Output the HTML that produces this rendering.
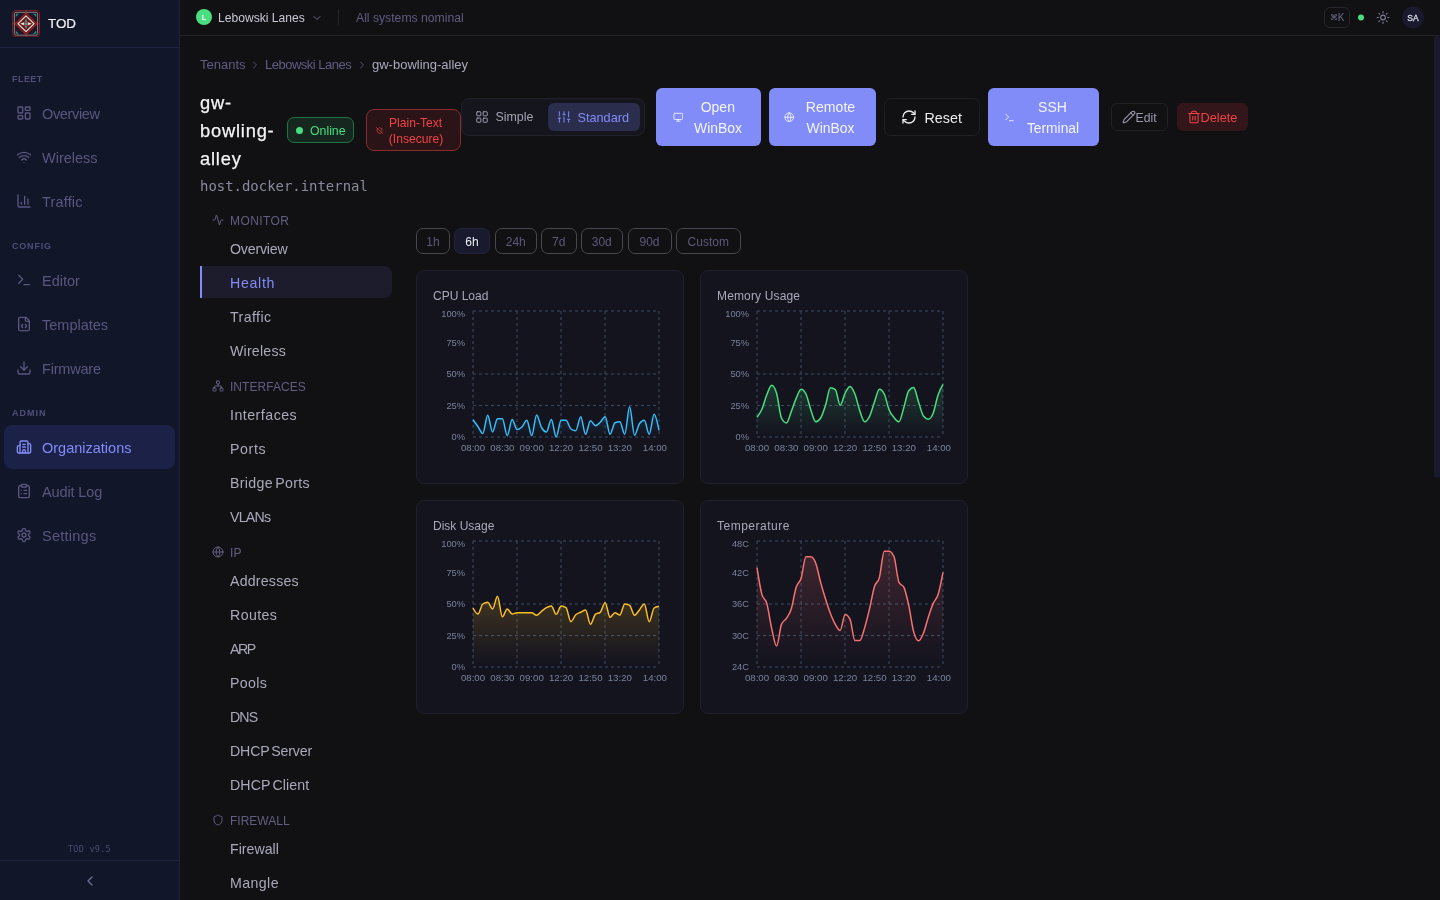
<!DOCTYPE html>
<html lang="en">
<head>
<meta charset="utf-8">
<title>TOD - gw-bowling-alley</title>
<style>
*{box-sizing:border-box;margin:0;padding:0}
html,body{width:1440px;height:900px;overflow:hidden;background:#111113;font-family:"Liberation Sans",sans-serif;color:#e4e4ea}
.abs{position:absolute}
.t{white-space:nowrap}
svg.ic{fill:none;stroke:currentColor;stroke-width:2;stroke-linecap:round;stroke-linejoin:round;display:block}
/* sidebar */
#sb{will-change:transform;position:absolute;left:0;top:0;width:180px;height:900px;background:#111628;border-right:1px solid #1c233b}
#sb .hd{position:absolute;left:0;top:0;width:179px;height:48px;border-bottom:1px solid #1c233b}
#sb .brand{position:absolute;left:48px;top:15px;font-size:13.4px;-webkit-text-stroke:.2px #f2f2f6;font-weight:400;color:#f2f2f6;line-height:18px}
#sb .sec{position:absolute;left:12px;font-size:9px;font-weight:700;letter-spacing:.45px;color:#514e7a;line-height:12px;margin-top:-.2px}
#sb .it{position:absolute;left:4px;width:171px;height:44px;border-radius:8px;color:#5a5680;font-size:14.5px}
#sb .it svg{position:absolute;left:12px;top:14px;width:16px;height:16px}
#sb .it span{position:absolute;left:38px;top:14px;line-height:18px;white-space:nowrap}
#sb .it.on{background:#1c2147;color:#818cf8}
#sb .ver{position:absolute;left:0;width:179px;top:843px;text-align:center;font-family:"DejaVu Sans Mono","Liberation Mono",monospace;font-size:8.6px;color:#4a4c72;line-height:10px;letter-spacing:.2px;margin-top:1.3px}
#sb .ft{position:absolute;left:0;top:860px;width:179px;height:40px;border-top:1px solid #1c233b;color:#6b7194}
/* topbar */
#tb{will-change:transform;position:absolute;left:180px;top:0;width:1260px;height:36px;border-bottom:1px solid #232326}
#main{will-change:transform;position:absolute;left:180px;top:36px;width:1260px;height:864px;overflow:hidden}

#tb .org{position:absolute;left:16px;top:9px;width:16px;height:16px;border-radius:50%;background:#4ade80;color:#fff;font-size:7.5px;font-weight:700;text-align:center;line-height:17.5px}
#tb .orgn{position:absolute;left:38px;top:10.7px;font-size:12.1px;line-height:15px;color:#c9c9d6;white-space:nowrap}
#tb .div{position:absolute;left:158px;top:9px;width:1px;height:16px;background:#232329}
#tb .st{position:absolute;left:176px;top:10.7px;font-size:12.2px;line-height:15px;color:#5f5b81;white-space:nowrap}
#tb .kbd{position:absolute;left:1144.4px;top:7.4px;width:25.5px;height:20.5px;border:1px solid #26262c;border-radius:6px;color:#6b6b8a;font-size:9px;line-height:18px;text-align:center}
#tb .dot{transform:translateY(.5px);position:absolute;left:1178px;top:14px;width:6px;height:6px;border-radius:50%;background:#4ade80}
#tb .ava{transform:translateY(.5px);position:absolute;left:1222px;top:6px;width:22px;height:22px;border-radius:50%;background:#1a1a2e;color:#d4d4e2;font-size:8.5px;font-weight:400;-webkit-text-stroke:.35px #d4d4e2;letter-spacing:.2px;text-align:center;line-height:22px}
.scroll{position:absolute;left:1254px;top:0;width:6px;height:442px;border-radius:3px;background:#1a1a2e}
.bc{position:absolute;top:21px;font-size:13px;line-height:16px;color:#605c82;white-space:nowrap}
.ttl{position:absolute;left:20px;top:53px;letter-spacing:.8px;-webkit-text-stroke:.25px #f4f4f8;font-size:18.3px;line-height:28px;color:#f4f4f8;font-weight:400}
.host{position:absolute;left:20px;top:141px;font-family:"DejaVu Sans Mono","Liberation Mono",monospace;font-size:13.95px;line-height:18px;color:#8a8a9f;margin-top:.4px;white-space:nowrap}
.badge-on{position:absolute;left:107px;top:81px;width:68px;height:26px;border:1px solid #1f7a3f;background:#12301f;border-radius:6px;color:#4ade80;font-size:12.5px;line-height:24px}
.badge-on i{position:absolute;left:8px;top:8px;width:7px;height:7px;border-radius:50%;background:#4ade80}
.badge-on span{position:absolute;left:22px;top:0}
.badge-pt{position:absolute;left:186px;top:73px;width:95px;height:42px;border:1px solid #8a2a2a;background:#2b1518;border-radius:6px;color:#ef4444;font-size:12.5px;line-height:16px;text-align:center}
.tg{position:absolute;left:281px;top:62px;width:184px;height:38px;border:1px solid #22222c;background:#16161f;border-radius:8px}
.tg .a,.tg .b{position:absolute;top:4px;height:28px;border-radius:6px;font-size:12.5px;line-height:28px;white-space:nowrap}
.tg .a{left:5px;width:78px;color:#a0a0b4}
.tg .b{left:86px;width:92px;background:#2a2d52;color:#818cf8}
.btnp{position:absolute;top:52px;height:58px;border-radius:6px;background:#818cf8;color:#fff;font-size:14.5px;line-height:21px;text-align:center}
.btno{position:absolute;border:1px solid #222228;border-radius:6px;white-space:nowrap}
.snl{position:absolute;left:50px;font-size:12px;line-height:14px;color:#625e83;white-space:nowrap;letter-spacing:.2px;margin-top:1.4px}
.sni{position:absolute;left:50px;font-size:14.2px;line-height:18px;color:#a9a9ba;white-space:nowrap;word-spacing:-2px}
.snic{position:absolute;left:31.5px;width:12px;height:12px;color:#625e83;margin-top:-.4px}
.rng{position:absolute;top:193px;height:25px;border:1px solid #3c3c44;border-radius:6px;color:#5d5d75;font-size:12px;line-height:23px;text-align:center}
.rng.on{background:#1a1a2e;border-color:#23233c;color:#e6e6f0}
.card{position:absolute;width:268px;height:214px;border:1px solid #20202c;border-radius:8px;background:#14141f}
.card h3{position:absolute;left:16px;top:17px;font-size:12px;font-weight:400;line-height:16px;color:#a9a9bb;white-space:nowrap}
svg.ch text{font-family:"Liberation Sans",sans-serif;font-size:9.7px;fill:#79829a}
svg.ch text.yl{font-size:9.3px}
svg.ch .grid{fill:none;stroke:#3b4a63;stroke-width:1;stroke-dasharray:3 3}
</style>
</head>
<body>
<div id="sb">
  <div class="hd">
    <svg class="abs" style="left:12px;top:9.7px" width="28" height="27.5" viewBox="0 0 28 28" preserveAspectRatio="none">
      <rect x="0.5" y="0.5" width="27" height="27" rx="3.5" fill="#2a1424" stroke="#861f24" stroke-width=".9"/>
      <rect x="2.400" y="2.400" width="23.200" height="23.200" rx="1.500" fill="#21152a" stroke="#8f8f8a" stroke-width=".9"/>
      <path d="M14 0.5V4M14 24v3.500M0.500 14H4M24 14h3.500" stroke="#b08a84" stroke-width=".6" opacity=".55"/>
      <path d="M14 3.300 24.700 14 14 24.700 3.300 14Z" fill="#1a0f1c" stroke="#a31f1f" stroke-width="1.300"/>
      <path d="M14 5.900 22.100 14 14 22.100 5.900 14Z" fill="#6c1719" stroke="#e4dccf" stroke-width="1.200"/>
      <path d="M14 8.300 16 14 14 19.700 12 14Z" fill="#27a79e"/>
      <path d="M8.200 14 12.500 12.100H15.500L19.800 14 15.500 15.900H12.500Z" fill="#f3ead8"/>
      <rect x="12.300" y="12.300" width="3.400" height="3.400" fill="#27a79e" stroke="#a31f1f" stroke-width=".8"/>
      <path d="M3.800 3.800h3.200L3.800 7Z M24.200 3.800h-3.200l3.200 3.200Z M3.800 24.200h3.200l-3.200-3.200Z M24.200 24.200h-3.200l3.200-3.200Z" fill="#1d8a84"/>
    </svg>
    <div class="brand">TOD</div>
  </div>
  <div class="sec" style="top:73px">FLEET</div>
  <div class="it" style="top:91px"><svg class="ic" viewBox="0 0 24 24"><rect width="7" height="9" x="3" y="3" rx="1"/><rect width="7" height="5" x="14" y="3" rx="1"/><rect width="7" height="9" x="14" y="12" rx="1"/><rect width="7" height="5" x="3" y="16" rx="1"/></svg><span style="letter-spacing:-0.34px">Overview</span></div>
  <div class="it" style="top:135px"><svg class="ic" viewBox="0 0 24 24"><path d="M12 20h.01"/><path d="M2 8.820a15 15 0 0 1 20 0"/><path d="M5 12.859a10 10 0 0 1 14 0"/><path d="M8.500 16.429a5 5 0 0 1 7 0"/></svg><span>Wireless</span></div>
  <div class="it" style="top:179px"><svg class="ic" viewBox="0 0 24 24"><path d="M3 3v16a2 2 0 0 0 2 2h16"/><path d="M18 17V9"/><path d="M13 17V5"/><path d="M8 17v-3"/></svg><span style="letter-spacing:0.17px">Traffic</span></div>
  <div class="sec" style="top:240px;letter-spacing:.8px">CONFIG</div>
  <div class="it" style="top:258px"><svg class="ic" viewBox="0 0 24 24"><polyline points="4 17 10 11 4 5"/><line x1="12" x2="20" y1="19" y2="19"/></svg><span>Editor</span></div>
  <div class="it" style="top:302px"><svg class="ic" viewBox="0 0 24 24"><path d="M10 12.500 8 15l2 2.500"/><path d="m14 12.500 2 2.500-2 2.500"/><path d="M14 2v4a2 2 0 0 0 2 2h4"/><path d="M15 2H6a2 2 0 0 0-2 2v16a2 2 0 0 0 2 2h12a2 2 0 0 0 2-2V7z"/></svg><span>Templates</span></div>
  <div class="it" style="top:346px"><svg class="ic" viewBox="0 0 24 24"><path d="M21 15v4a2 2 0 0 1-2 2H5a2 2 0 0 1-2-2v-4"/><polyline points="7 10 12 15 17 10"/><line x1="12" x2="12" y1="15" y2="3"/></svg><span style="letter-spacing:-0.20px">Firmware</span></div>
  <div class="sec" style="top:407.4px;letter-spacing:1px">ADMIN</div>
  <div class="it on" style="top:425px"><svg class="ic" viewBox="0 0 24 24"><path d="M10 12h4"/><path d="M10 8h4"/><path d="M14 21v-3a2 2 0 0 0-4 0v3"/><path d="M6 10H4a2 2 0 0 0-2 2v7a2 2 0 0 0 2 2h16a2 2 0 0 0 2-2V9a2 2 0 0 0-2-2h-2"/><path d="M6 21V5a2 2 0 0 1 2-2h8a2 2 0 0 1 2 2v16"/></svg><span>Organizations</span></div>
  <div class="it" style="top:469px"><svg class="ic" viewBox="0 0 24 24"><rect width="8" height="4" x="8" y="2" rx="1" ry="1"/><path d="M16 4h2a2 2 0 0 1 2 2v14a2 2 0 0 1-2 2H6a2 2 0 0 1-2-2V6a2 2 0 0 1 2-2h2"/><path d="M12 11h4"/><path d="M12 16h4"/><path d="M8 11h.01"/><path d="M8 16h.01"/></svg><span style="letter-spacing:-0.12px">Audit Log</span></div>
  <div class="it" style="top:513px"><svg class="ic" viewBox="0 0 24 24"><path d="M12.220 2h-.440a2 2 0 0 0-2 2v.180a2 2 0 0 1-1 1.730l-.430.250a2 2 0 0 1-2 0l-.150-.080a2 2 0 0 0-2.730.730l-.220.380a2 2 0 0 0 .730 2.730l.150.100a2 2 0 0 1 1 1.720v.510a2 2 0 0 1-1 1.740l-.150.090a2 2 0 0 0-.730 2.730l.220.380a2 2 0 0 0 2.730.730l.150-.080a2 2 0 0 1 2 0l.430.250a2 2 0 0 1 1 1.730V20a2 2 0 0 0 2 2h.440a2 2 0 0 0 2-2v-.180a2 2 0 0 1 1-1.730l.430-.250a2 2 0 0 1 2 0l.150.080a2 2 0 0 0 2.730-.730l.220-.390a2 2 0 0 0-.730-2.730l-.150-.080a2 2 0 0 1-1-1.740v-.500a2 2 0 0 1 1-1.740l.150-.090a2 2 0 0 0 .730-2.730l-.220-.380a2 2 0 0 0-2.730-.730l-.150.080a2 2 0 0 1-2 0l-.430-.250a2 2 0 0 1-1-1.730V4a2 2 0 0 0-2-2z"/><circle cx="12" cy="12" r="3"/></svg><span style="letter-spacing:.25px">Settings</span></div>
  <div class="ver">TOD v9.5</div>
  <div class="ft"><svg class="ic abs" style="left:81.6px;top:11.6px" width="16" height="16" viewBox="0 0 24 24"><path d="m15 18-6-6 6-6"/></svg></div>
</div>
<div id="tb">
  <div class="org">L</div><div class="orgn">Lebowski Lanes</div>
  <svg class="ic abs" style="left:130.5px;top:12px;color:#6b6b8a" width="12" height="12" viewBox="0 0 24 24"><path d="m6 9 6 6 6-6"/></svg>
  <div class="div"></div><div class="st">All systems nominal</div>
  <div class="kbd"><span style="font-size:7.5px;position:relative;top:-.4px">⌘</span><span style="font-size:10px;position:relative;top:.8px">K</span></div><div class="dot"></div>
  <svg class="ic abs" style="left:1196px;top:10px;transform:translateY(.5px);color:#7a7a96" width="14" height="14" viewBox="0 0 24 24"><circle cx="12" cy="12" r="4"/><path d="M12 2v2"/><path d="M12 20v2"/><path d="m4.930 4.930 1.410 1.410"/><path d="m17.660 17.660 1.410 1.410"/><path d="M2 12h2"/><path d="M20 12h2"/><path d="m6.340 17.660-1.410 1.410"/><path d="m19.070 4.930-1.410 1.410"/></svg>
  <div class="ava">SA</div>
</div>
<div id="main">
  <div class="scroll"></div>
  <div class="bc" style="left:20px">Tenants</div><svg class="ic abs" style="left:69px;top:22.6px;color:#534f72" width="12" height="12" viewBox="0 0 24 24"><path d="m9 18 6-6-6-6"/></svg>
  <div class="bc" style="left:85px;letter-spacing:-.5px">Lebowski Lanes</div><svg class="ic abs" style="left:176px;top:22.6px;color:#534f72" width="12" height="12" viewBox="0 0 24 24"><path d="m9 18 6-6-6-6"/></svg>
  <div class="bc" style="left:192px;color:#a9a9bb">gw-bowling-alley</div>
  <div class="ttl">gw-<br>bowling-<br>alley</div>
  <div class="host">host.docker.internal</div>
<svg class="ic snic" style="top:178px" viewBox="0 0 24 24"><path d="M22 12h-2.480a2 2 0 0 0-1.930 1.460l-2.350 8.360a.250.250 0 0 1-.480 0L9.240 2.180a.250.250 0 0 0-.480 0l-2.350 8.360A2 2 0 0 1 4.490 12H2"/></svg><div class="snl" style="top:177px;letter-spacing:0.43px">MONITOR</div>
  <div class="sni" style="top:204px;letter-spacing:-0.20px">Overview</div>
  <div class="abs" style="left:20px;top:230px;width:192px;height:32px;background:#1c1c2c;border-left:2px solid #818cf8;border-radius:0 8px 8px 0"></div>
  <div class="sni" style="top:238px;color:#818cf8;letter-spacing:0.68px">Health</div>
  <div class="sni" style="top:272px;letter-spacing:0.40px">Traffic</div>
  <div class="sni" style="top:306px;letter-spacing:0.20px">Wireless</div>
  <svg class="ic snic" style="top:344px" viewBox="0 0 24 24"><rect x="16" y="16" width="6" height="6" rx="1"/><rect x="2" y="16" width="6" height="6" rx="1"/><rect x="9" y="2" width="6" height="6" rx="1"/><path d="M5 16v-3a1 1 0 0 1 1-1h12a1 1 0 0 1 1 1v3"/><path d="M12 12V8"/></svg><div class="snl" style="top:343px;letter-spacing:0.04px">INTERFACES</div>
  <div class="sni" style="top:370px;letter-spacing:0.49px">Interfaces</div>
  <div class="sni" style="top:404px;letter-spacing:0.60px">Ports</div>
  <div class="sni" style="top:438px;letter-spacing:0.33px">Bridge Ports</div>
  <div class="sni" style="top:472px;letter-spacing:-0.75px">VLANs</div>
  <svg class="ic snic" style="top:510px" viewBox="0 0 24 24"><circle cx="12" cy="12" r="10"/><path d="M12 2a14.500 14.500 0 0 0 0 20 14.500 14.500 0 0 0 0-20"/><path d="M2 12h20"/></svg><div class="snl" style="top:509px">IP</div>
  <div class="sni" style="top:536px;letter-spacing:0.20px">Addresses</div>
  <div class="sni" style="top:570px;letter-spacing:0.40px">Routes</div>
  <div class="sni" style="top:604px;letter-spacing:-1.50px">ARP</div>
  <div class="sni" style="top:638px;letter-spacing:0.35px">Pools</div>
  <div class="sni" style="top:672px;letter-spacing:-0.90px">DNS</div>
  <div class="sni" style="top:706px;letter-spacing:-0.14px">DHCP Server</div>
  <div class="sni" style="top:740px;letter-spacing:0.10px">DHCP Client</div>
  <svg class="ic snic" style="top:778px" viewBox="0 0 24 24"><path d="M20 13c0 5-3.500 7.500-7.660 8.950a1 1 0 0 1-.670-.010C7.500 20.500 4 18 4 13V6a1 1 0 0 1 1-1c2 0 4.500-1.200 6.240-2.720a1.170 1.170 0 0 1 1.520 0C14.510 3.810 17 5 19 5a1 1 0 0 1 1 1z"/></svg><div class="snl" style="top:777px;letter-spacing:0.00px">FIREWALL</div>
  <div class="sni" style="top:804px">Firewall</div>
  <div class="sni" style="top:838px;letter-spacing:0.40px">Mangle</div>
  <div class="card" id="c1" style="left:236px;top:234px"><h3>CPU Load</h3></div>
  <div class="card" id="c2" style="left:520px;top:234px"><h3 style="letter-spacing:.15px">Memory Usage</h3></div>
  <div class="card" id="c3" style="left:236px;top:464px"><h3>Disk Usage</h3></div>
  <div class="card" id="c4" style="left:520px;top:464px"><h3 style="letter-spacing:.5px">Temperature</h3></div>
<!--CHARTS-->
<svg class="abs ch" style="left:236px;top:234px" width="268" height="214" viewBox="0 0 268 214">
<defs><linearGradient id="g1" x1="0" y1="0" x2="0" y2="1"><stop offset="5%" stop-color="#38bdf8" stop-opacity="0.18"/><stop offset="95%" stop-color="#38bdf8" stop-opacity="0"/></linearGradient></defs>
<path d="M57,41H243M57,104H243M57,135.5H243M57,167H243M57,41V167M101,41V167M145,41V167M189,41V167M243,41V167" class="grid"/>
<text x="57.0" y="181.4" text-anchor="middle">08:00</text>
<text x="86.4" y="181.4" text-anchor="middle">08:30</text>
<text x="115.7" y="181.4" text-anchor="middle">09:00</text>
<text x="145.1" y="181.4" text-anchor="middle">12:20</text>
<text x="174.5" y="181.4" text-anchor="middle">12:50</text>
<text x="203.8" y="181.4" text-anchor="middle">13:20</text>
<text x="251" y="181.4" text-anchor="end">14:00</text>
<text x="49" y="46.5" text-anchor="end" class="yl">100%</text>
<text x="49" y="76.0" text-anchor="end" class="yl">75%</text>
<text x="49" y="106.5" text-anchor="end" class="yl">50%</text>
<text x="49" y="139.0" text-anchor="end" class="yl">25%</text>
<text x="49" y="169.8" text-anchor="end" class="yl">0%</text>
<path d="M57.00,149.70C58.63,151.95 60.26,154.20 61.89,156.50C63.53,158.80 65.16,163.50 66.79,163.50C68.42,163.50 70.05,145.30 71.68,145.30C73.32,145.30 74.95,162.00 76.58,162.00C78.21,162.00 79.84,148.70 81.47,148.70C83.11,148.70 84.74,148.70 86.37,148.70C88.00,148.70 89.63,165.70 91.26,165.70C92.89,165.70 94.53,149.50 96.16,149.50C97.79,149.50 99.42,159.50 101.05,159.50C102.68,159.50 104.32,158.53 105.95,157.00C107.58,155.47 109.21,150.30 110.84,150.30C112.47,150.30 114.11,165.70 115.74,165.70C117.37,165.70 119.00,145.00 120.63,145.00C122.26,145.00 123.89,154.67 125.53,157.50C127.16,160.33 128.79,162.00 130.42,162.00C132.05,162.00 133.68,149.50 135.32,149.50C136.95,149.50 138.58,167.00 140.21,167.00C141.84,167.00 143.47,150.30 145.11,150.30C146.74,150.30 148.37,150.30 150.00,150.30C151.63,150.30 153.26,157.87 154.89,159.00C156.53,160.13 158.16,160.70 159.79,160.70C161.42,160.70 163.05,146.70 164.68,146.70C166.32,146.70 167.95,164.30 169.58,164.30C171.21,164.30 172.84,150.70 174.47,150.70C176.11,150.70 177.74,155.70 179.37,155.70C181.00,155.70 182.63,153.80 184.26,152.30C185.89,150.80 187.53,146.70 189.16,146.70C190.79,146.70 192.42,164.30 194.05,164.30C195.68,164.30 197.32,153.37 198.95,152.70C200.58,152.03 202.21,151.70 203.84,151.70C205.47,151.70 207.11,164.30 208.74,164.30C210.37,164.30 212.00,136.70 213.63,136.70C215.26,136.70 216.89,165.30 218.53,165.30C220.16,165.30 221.79,155.97 223.42,153.70C225.05,151.43 226.68,150.30 228.32,150.30C229.95,150.30 231.58,164.30 233.21,164.30C234.84,164.30 236.47,144.30 238.11,144.30C239.74,144.30 241.37,152.30 243.00,160.30L243.00,167L57,167Z" fill="url(#g1)"/>
<path d="M57.00,149.70C58.63,151.95 60.26,154.20 61.89,156.50C63.53,158.80 65.16,163.50 66.79,163.50C68.42,163.50 70.05,145.30 71.68,145.30C73.32,145.30 74.95,162.00 76.58,162.00C78.21,162.00 79.84,148.70 81.47,148.70C83.11,148.70 84.74,148.70 86.37,148.70C88.00,148.70 89.63,165.70 91.26,165.70C92.89,165.70 94.53,149.50 96.16,149.50C97.79,149.50 99.42,159.50 101.05,159.50C102.68,159.50 104.32,158.53 105.95,157.00C107.58,155.47 109.21,150.30 110.84,150.30C112.47,150.30 114.11,165.70 115.74,165.70C117.37,165.70 119.00,145.00 120.63,145.00C122.26,145.00 123.89,154.67 125.53,157.50C127.16,160.33 128.79,162.00 130.42,162.00C132.05,162.00 133.68,149.50 135.32,149.50C136.95,149.50 138.58,167.00 140.21,167.00C141.84,167.00 143.47,150.30 145.11,150.30C146.74,150.30 148.37,150.30 150.00,150.30C151.63,150.30 153.26,157.87 154.89,159.00C156.53,160.13 158.16,160.70 159.79,160.70C161.42,160.70 163.05,146.70 164.68,146.70C166.32,146.70 167.95,164.30 169.58,164.30C171.21,164.30 172.84,150.70 174.47,150.70C176.11,150.70 177.74,155.70 179.37,155.70C181.00,155.70 182.63,153.80 184.26,152.30C185.89,150.80 187.53,146.70 189.16,146.70C190.79,146.70 192.42,164.30 194.05,164.30C195.68,164.30 197.32,153.37 198.95,152.70C200.58,152.03 202.21,151.70 203.84,151.70C205.47,151.70 207.11,164.30 208.74,164.30C210.37,164.30 212.00,136.70 213.63,136.70C215.26,136.70 216.89,165.30 218.53,165.30C220.16,165.30 221.79,155.97 223.42,153.70C225.05,151.43 226.68,150.30 228.32,150.30C229.95,150.30 231.58,164.30 233.21,164.30C234.84,164.30 236.47,144.30 238.11,144.30C239.74,144.30 241.37,152.30 243.00,160.30" fill="none" stroke="#38bdf8" stroke-width="1.500" stroke-linejoin="round"/>
</svg>
<svg class="abs ch" style="left:520px;top:234px" width="268" height="214" viewBox="0 0 268 214">
<defs><linearGradient id="g2" x1="0" y1="0" x2="0" y2="1"><stop offset="5%" stop-color="#4ade80" stop-opacity="0.18"/><stop offset="95%" stop-color="#4ade80" stop-opacity="0"/></linearGradient></defs>
<path d="M57,41H243M57,104H243M57,135.5H243M57,167H243M57,41V167M101,41V167M145,41V167M189,41V167M243,41V167" class="grid"/>
<text x="57.0" y="181.4" text-anchor="middle">08:00</text>
<text x="86.4" y="181.4" text-anchor="middle">08:30</text>
<text x="115.7" y="181.4" text-anchor="middle">09:00</text>
<text x="145.1" y="181.4" text-anchor="middle">12:20</text>
<text x="174.5" y="181.4" text-anchor="middle">12:50</text>
<text x="203.8" y="181.4" text-anchor="middle">13:20</text>
<text x="251" y="181.4" text-anchor="end">14:00</text>
<text x="49" y="46.5" text-anchor="end" class="yl">100%</text>
<text x="49" y="76.0" text-anchor="end" class="yl">75%</text>
<text x="49" y="106.5" text-anchor="end" class="yl">50%</text>
<text x="49" y="139.0" text-anchor="end" class="yl">25%</text>
<text x="49" y="169.8" text-anchor="end" class="yl">0%</text>
<path d="M57.00,147.20C58.63,145.07 60.26,142.93 61.89,139.20C63.53,135.47 65.16,128.80 66.79,124.80C68.42,120.80 70.05,115.20 71.68,115.20C73.32,115.20 74.95,117.87 76.58,123.20C78.21,128.53 79.84,144.67 81.47,148.00C83.11,151.33 84.74,153.00 86.37,153.00C88.00,153.00 89.63,145.70 91.26,141.60C92.89,137.50 94.53,132.13 96.16,128.40C97.79,124.67 99.42,119.20 101.05,119.20C102.68,119.20 104.32,120.80 105.95,124.00C107.58,127.20 109.21,135.37 110.84,140.00C112.47,144.63 114.11,151.80 115.74,151.80C117.37,151.80 119.00,150.53 120.63,148.00C122.26,145.47 123.89,140.23 125.53,135.20C127.16,130.17 128.79,117.80 130.42,117.80C132.05,117.80 133.68,118.40 135.32,119.60C136.95,120.80 138.58,135.20 140.21,135.20C141.84,135.20 143.47,126.33 145.11,123.20C146.74,120.07 148.37,116.40 150.00,116.40C151.63,116.40 153.26,119.93 154.89,124.00C156.53,128.07 158.16,136.17 159.79,140.80C161.42,145.43 163.05,151.80 164.68,151.80C166.32,151.80 167.95,149.70 169.58,146.40C171.21,143.10 172.84,136.53 174.47,132.00C176.11,127.47 177.74,119.20 179.37,119.20C181.00,119.20 182.63,120.80 184.26,124.00C185.89,127.20 187.53,136.07 189.16,140.00C190.79,143.93 192.42,145.63 194.05,147.60C195.68,149.57 197.32,151.80 198.95,151.80C200.58,151.80 202.21,142.77 203.84,137.60C205.47,132.43 207.11,122.93 208.74,120.80C210.37,118.67 212.00,117.60 213.63,117.60C215.26,117.60 216.89,127.27 218.53,132.00C220.16,136.73 221.79,143.87 223.42,146.00C225.05,148.13 226.68,149.20 228.32,149.20C229.95,149.20 231.58,147.20 233.21,143.20C234.84,139.20 236.47,129.60 238.11,124.80C239.74,120.00 241.37,117.20 243.00,114.40L243.00,167L57,167Z" fill="url(#g2)"/>
<path d="M57.00,147.20C58.63,145.07 60.26,142.93 61.89,139.20C63.53,135.47 65.16,128.80 66.79,124.80C68.42,120.80 70.05,115.20 71.68,115.20C73.32,115.20 74.95,117.87 76.58,123.20C78.21,128.53 79.84,144.67 81.47,148.00C83.11,151.33 84.74,153.00 86.37,153.00C88.00,153.00 89.63,145.70 91.26,141.60C92.89,137.50 94.53,132.13 96.16,128.40C97.79,124.67 99.42,119.20 101.05,119.20C102.68,119.20 104.32,120.80 105.95,124.00C107.58,127.20 109.21,135.37 110.84,140.00C112.47,144.63 114.11,151.80 115.74,151.80C117.37,151.80 119.00,150.53 120.63,148.00C122.26,145.47 123.89,140.23 125.53,135.20C127.16,130.17 128.79,117.80 130.42,117.80C132.05,117.80 133.68,118.40 135.32,119.60C136.95,120.80 138.58,135.20 140.21,135.20C141.84,135.20 143.47,126.33 145.11,123.20C146.74,120.07 148.37,116.40 150.00,116.40C151.63,116.40 153.26,119.93 154.89,124.00C156.53,128.07 158.16,136.17 159.79,140.80C161.42,145.43 163.05,151.80 164.68,151.80C166.32,151.80 167.95,149.70 169.58,146.40C171.21,143.10 172.84,136.53 174.47,132.00C176.11,127.47 177.74,119.20 179.37,119.20C181.00,119.20 182.63,120.80 184.26,124.00C185.89,127.20 187.53,136.07 189.16,140.00C190.79,143.93 192.42,145.63 194.05,147.60C195.68,149.57 197.32,151.80 198.95,151.80C200.58,151.80 202.21,142.77 203.84,137.60C205.47,132.43 207.11,122.93 208.74,120.80C210.37,118.67 212.00,117.60 213.63,117.60C215.26,117.60 216.89,127.27 218.53,132.00C220.16,136.73 221.79,143.87 223.42,146.00C225.05,148.13 226.68,149.20 228.32,149.20C229.95,149.20 231.58,147.20 233.21,143.20C234.84,139.20 236.47,129.60 238.11,124.80C239.74,120.00 241.37,117.20 243.00,114.40" fill="none" stroke="#4ade80" stroke-width="1.500" stroke-linejoin="round"/>
</svg>
<svg class="abs ch" style="left:236px;top:464px" width="268" height="214" viewBox="0 0 268 214">
<defs><linearGradient id="g3" x1="0" y1="0" x2="0" y2="1"><stop offset="5%" stop-color="#fbbf24" stop-opacity="0.18"/><stop offset="95%" stop-color="#fbbf24" stop-opacity="0"/></linearGradient></defs>
<path d="M57,41H243M57,104H243M57,135.5H243M57,167H243M57,41V167M101,41V167M145,41V167M189,41V167M243,41V167" class="grid"/>
<text x="57.0" y="181.4" text-anchor="middle">08:00</text>
<text x="86.4" y="181.4" text-anchor="middle">08:30</text>
<text x="115.7" y="181.4" text-anchor="middle">09:00</text>
<text x="145.1" y="181.4" text-anchor="middle">12:20</text>
<text x="174.5" y="181.4" text-anchor="middle">12:50</text>
<text x="203.8" y="181.4" text-anchor="middle">13:20</text>
<text x="251" y="181.4" text-anchor="end">14:00</text>
<text x="49" y="46.5" text-anchor="end" class="yl">100%</text>
<text x="49" y="76.0" text-anchor="end" class="yl">75%</text>
<text x="49" y="106.5" text-anchor="end" class="yl">50%</text>
<text x="49" y="139.0" text-anchor="end" class="yl">25%</text>
<text x="49" y="169.8" text-anchor="end" class="yl">0%</text>
<path d="M57.00,108.00C58.63,111.00 60.26,114.00 61.89,114.00C63.53,114.00 65.16,105.13 66.79,104.00C68.42,102.87 70.05,102.30 71.68,102.30C73.32,102.30 74.95,109.00 76.58,109.00C78.21,109.00 79.84,96.30 81.47,96.30C83.11,96.30 84.74,116.70 86.37,116.70C88.00,116.70 89.63,109.00 91.26,109.00C92.89,109.00 94.53,114.00 96.16,114.00C97.79,114.00 99.42,112.80 101.05,112.80C102.68,112.80 104.32,112.80 105.95,112.80C107.58,112.80 109.21,112.80 110.84,112.80C112.47,112.80 114.11,112.80 115.74,112.80C117.37,112.80 119.00,115.30 120.63,115.30C122.26,115.30 123.89,112.57 125.53,111.30C127.16,110.03 128.79,108.58 130.42,107.70C132.05,106.82 133.68,106.00 135.32,106.00C136.95,106.00 138.58,114.30 140.21,114.30C141.84,114.30 143.47,106.00 145.11,106.00C146.74,106.00 148.37,106.57 150.00,107.70C151.63,108.83 153.26,121.70 154.89,121.70C156.53,121.70 158.16,116.27 159.79,114.70C161.42,113.13 163.05,113.08 164.68,112.30C166.32,111.52 167.95,110.00 169.58,110.00C171.21,110.00 172.84,124.30 174.47,124.30C176.11,124.30 177.74,115.63 179.37,114.30C181.00,112.97 182.63,113.63 184.26,112.30C185.89,110.97 187.53,102.70 189.16,102.70C190.79,102.70 192.42,117.30 194.05,117.30C195.68,117.30 197.32,112.70 198.95,112.70C200.58,112.70 202.21,115.00 203.84,115.00C205.47,115.00 207.11,104.00 208.74,104.00C210.37,104.00 212.00,104.43 213.63,105.30C215.26,106.17 216.89,115.30 218.53,115.30C220.16,115.30 221.79,111.88 223.42,110.00C225.05,108.12 226.68,104.00 228.32,104.00C229.95,104.00 231.58,121.70 233.21,121.70C234.84,121.70 236.47,109.13 238.11,108.00C239.74,106.87 241.37,106.58 243.00,106.30L243.00,167L57,167Z" fill="url(#g3)"/>
<path d="M57.00,108.00C58.63,111.00 60.26,114.00 61.89,114.00C63.53,114.00 65.16,105.13 66.79,104.00C68.42,102.87 70.05,102.30 71.68,102.30C73.32,102.30 74.95,109.00 76.58,109.00C78.21,109.00 79.84,96.30 81.47,96.30C83.11,96.30 84.74,116.70 86.37,116.70C88.00,116.70 89.63,109.00 91.26,109.00C92.89,109.00 94.53,114.00 96.16,114.00C97.79,114.00 99.42,112.80 101.05,112.80C102.68,112.80 104.32,112.80 105.95,112.80C107.58,112.80 109.21,112.80 110.84,112.80C112.47,112.80 114.11,112.80 115.74,112.80C117.37,112.80 119.00,115.30 120.63,115.30C122.26,115.30 123.89,112.57 125.53,111.30C127.16,110.03 128.79,108.58 130.42,107.70C132.05,106.82 133.68,106.00 135.32,106.00C136.95,106.00 138.58,114.30 140.21,114.30C141.84,114.30 143.47,106.00 145.11,106.00C146.74,106.00 148.37,106.57 150.00,107.70C151.63,108.83 153.26,121.70 154.89,121.70C156.53,121.70 158.16,116.27 159.79,114.70C161.42,113.13 163.05,113.08 164.68,112.30C166.32,111.52 167.95,110.00 169.58,110.00C171.21,110.00 172.84,124.30 174.47,124.30C176.11,124.30 177.74,115.63 179.37,114.30C181.00,112.97 182.63,113.63 184.26,112.30C185.89,110.97 187.53,102.70 189.16,102.70C190.79,102.70 192.42,117.30 194.05,117.30C195.68,117.30 197.32,112.70 198.95,112.70C200.58,112.70 202.21,115.00 203.84,115.00C205.47,115.00 207.11,104.00 208.74,104.00C210.37,104.00 212.00,104.43 213.63,105.30C215.26,106.17 216.89,115.30 218.53,115.30C220.16,115.30 221.79,111.88 223.42,110.00C225.05,108.12 226.68,104.00 228.32,104.00C229.95,104.00 231.58,121.70 233.21,121.70C234.84,121.70 236.47,109.13 238.11,108.00C239.74,106.87 241.37,106.58 243.00,106.30" fill="none" stroke="#fbbf24" stroke-width="1.500" stroke-linejoin="round"/>
</svg>
<svg class="abs ch" style="left:520px;top:464px" width="268" height="214" viewBox="0 0 268 214">
<defs><linearGradient id="g4" x1="0" y1="0" x2="0" y2="1"><stop offset="5%" stop-color="#f87171" stop-opacity="0.18"/><stop offset="95%" stop-color="#f87171" stop-opacity="0"/></linearGradient></defs>
<path d="M57,41H243M57,104H243M57,135.5H243M57,167H243M57,41V167M101,41V167M145,41V167M189,41V167M243,41V167" class="grid"/>
<text x="57.0" y="181.4" text-anchor="middle">08:00</text>
<text x="86.4" y="181.4" text-anchor="middle">08:30</text>
<text x="115.7" y="181.4" text-anchor="middle">09:00</text>
<text x="145.1" y="181.4" text-anchor="middle">12:20</text>
<text x="174.5" y="181.4" text-anchor="middle">12:50</text>
<text x="203.8" y="181.4" text-anchor="middle">13:20</text>
<text x="251" y="181.4" text-anchor="end">14:00</text>
<text x="49" y="46.5" text-anchor="end" class="yl">48C</text>
<text x="49" y="76.0" text-anchor="end" class="yl">42C</text>
<text x="49" y="106.5" text-anchor="end" class="yl">36C</text>
<text x="49" y="139.0" text-anchor="end" class="yl">30C</text>
<text x="49" y="169.8" text-anchor="end" class="yl">24C</text>
<path d="M57.00,67.60C58.63,78.02 60.26,88.43 61.89,94.40C63.53,100.37 65.16,97.73 66.79,103.40C68.42,109.07 70.05,121.30 71.68,128.40C73.32,135.50 74.95,146.00 76.58,146.00C78.21,146.00 79.84,128.40 81.47,124.40C83.11,120.40 84.74,120.97 86.37,118.40C88.00,115.83 89.63,114.20 91.26,109.00C92.89,103.80 94.53,92.30 96.16,87.20C97.79,82.10 99.42,83.47 101.05,78.40C102.68,73.33 104.32,56.80 105.95,56.80C107.58,56.80 109.21,56.80 110.84,56.80C112.47,56.80 114.11,58.93 115.74,63.20C117.37,67.47 119.00,76.43 120.63,82.40C122.26,88.37 123.89,93.82 125.53,99.00C127.16,104.18 128.79,109.27 130.42,113.50C132.05,117.73 133.68,121.58 135.32,124.40C136.95,127.22 138.58,130.40 140.21,130.40C141.84,130.40 143.47,114.40 145.11,114.40C146.74,114.40 148.37,116.00 150.00,119.20C151.63,122.40 153.26,140.40 154.89,140.40C156.53,140.40 158.16,140.40 159.79,140.40C161.42,140.40 163.05,132.90 164.68,127.60C166.32,122.30 167.95,115.47 169.58,108.60C171.21,101.73 172.84,91.57 174.47,86.40C176.11,81.23 177.74,83.47 179.37,77.60C181.00,71.73 182.63,51.20 184.26,51.20C185.89,51.20 187.53,51.20 189.16,51.20C190.79,51.20 192.42,53.07 194.05,56.80C195.68,60.53 197.32,79.20 198.95,82.40C200.58,85.60 202.21,84.00 203.84,87.20C205.47,90.40 207.11,98.00 208.74,105.40C210.37,112.80 212.00,125.70 213.63,131.60C215.26,137.50 216.89,140.80 218.53,140.80C220.16,140.80 221.79,137.13 223.42,133.20C225.05,129.27 226.68,122.17 228.32,117.20C229.95,112.23 231.58,107.20 233.21,103.40C234.84,99.60 236.47,99.57 238.11,94.40C239.74,89.23 241.37,80.82 243.00,72.40L243.00,167L57,167Z" fill="url(#g4)"/>
<path d="M57.00,67.60C58.63,78.02 60.26,88.43 61.89,94.40C63.53,100.37 65.16,97.73 66.79,103.40C68.42,109.07 70.05,121.30 71.68,128.40C73.32,135.50 74.95,146.00 76.58,146.00C78.21,146.00 79.84,128.40 81.47,124.40C83.11,120.40 84.74,120.97 86.37,118.40C88.00,115.83 89.63,114.20 91.26,109.00C92.89,103.80 94.53,92.30 96.16,87.20C97.79,82.10 99.42,83.47 101.05,78.40C102.68,73.33 104.32,56.80 105.95,56.80C107.58,56.80 109.21,56.80 110.84,56.80C112.47,56.80 114.11,58.93 115.74,63.20C117.37,67.47 119.00,76.43 120.63,82.40C122.26,88.37 123.89,93.82 125.53,99.00C127.16,104.18 128.79,109.27 130.42,113.50C132.05,117.73 133.68,121.58 135.32,124.40C136.95,127.22 138.58,130.40 140.21,130.40C141.84,130.40 143.47,114.40 145.11,114.40C146.74,114.40 148.37,116.00 150.00,119.20C151.63,122.40 153.26,140.40 154.89,140.40C156.53,140.40 158.16,140.40 159.79,140.40C161.42,140.40 163.05,132.90 164.68,127.60C166.32,122.30 167.95,115.47 169.58,108.60C171.21,101.73 172.84,91.57 174.47,86.40C176.11,81.23 177.74,83.47 179.37,77.60C181.00,71.73 182.63,51.20 184.26,51.20C185.89,51.20 187.53,51.20 189.16,51.20C190.79,51.20 192.42,53.07 194.05,56.80C195.68,60.53 197.32,79.20 198.95,82.40C200.58,85.60 202.21,84.00 203.84,87.20C205.47,90.40 207.11,98.00 208.74,105.40C210.37,112.80 212.00,125.70 213.63,131.60C215.26,137.50 216.89,140.80 218.53,140.80C220.16,140.80 221.79,137.13 223.42,133.20C225.05,129.27 226.68,122.17 228.32,117.20C229.95,112.23 231.58,107.20 233.21,103.40C234.84,99.60 236.47,99.57 238.11,94.40C239.74,89.23 241.37,80.82 243.00,72.40" fill="none" stroke="#f87171" stroke-width="1.500" stroke-linejoin="round"/>
</svg>
<!--/CHARTS-->
</div>
<div id="hdr" class="abs" style="left:0;top:0;will-change:transform">
<div class="abs" style="left:287px;top:117px;width:67px;height:26px;border:1px solid #1e7540;background:#15271f;border-radius:7px"></div>
<div class="abs" style="left:296px;top:126.5px;width:7px;height:7.0px;border-radius:50%;background:#4ade80"></div>
<div class="abs t" style="left:310px;top:122.8px;font-size:12.3px;line-height:17px;color:#4ade80;">Online</div>
<div class="abs" style="left:366px;top:109px;width:95px;height:42px;border:1px solid #8a2b2d;background:#2a1417;border-radius:8px"></div>
<svg class="ic abs" style="left:375.8px;top:127px;color:#ef4444;stroke-width:2.2" width="7.2" height="7.2" viewBox="0 0 24 24"><path d="m2 2 20 20"/><path d="M5 5a1 1 0 0 0-1 1v7c0 5 3.500 7.500 7.670 8.940a1 1 0 0 0 .670.010c2.350-.820 4.480-1.970 5.900-3.710"/><path d="M9.309 3.652A12.252 12.252 0 0 0 11.240 2.280a1.170 1.170 0 0 1 1.520 0C14.510 3.810 17 5 19 5a1 1 0 0 1 1 1v7a9.784 9.784 0 0 1-.080 1.264"/></svg>
<div class="abs t" style="left:315.6px;top:114.9px;width:200px;text-align:center;font-size:12.1px;line-height:17px;color:#ef4444;">Plain-Text</div>
<div class="abs t" style="left:316px;top:131.1px;width:200px;text-align:center;font-size:12.1px;line-height:17px;color:#ef4444;">(Insecure)</div>
<div class="abs" style="left:461px;top:98px;width:183.5px;height:38px;border:1px solid #21212c;background:#15151e;border-radius:8px"></div>
<div class="abs" style="left:547.5px;top:103px;width:92.0px;height:28px;background:#2b2d4d;border-radius:6px"></div>
<svg class="ic abs" style="left:475.2px;top:110px;color:#9c9cb0;stroke-width:1.700" width="14" height="14" viewBox="0 0 24 24"><rect width="7" height="7" x="3" y="3" rx="1"/><rect width="7" height="7" x="14" y="3" rx="1"/><rect width="7" height="7" x="14" y="14" rx="1"/><rect width="7" height="7" x="3" y="14" rx="1"/></svg>
<div class="abs t" style="left:495.5px;top:109.4px;font-size:12.4px;line-height:17px;color:#a3a3b5;">Simple</div>
<svg class="ic abs" style="left:557.4px;top:110px;color:#818cf8;stroke-width:1.700" width="14" height="14" viewBox="0 0 24 24"><line x1="4" x2="4" y1="21" y2="14"/><line x1="4" x2="4" y1="10" y2="3"/><line x1="12" x2="12" y1="21" y2="12"/><line x1="12" x2="12" y1="8" y2="3"/><line x1="20" x2="20" y1="21" y2="16"/><line x1="20" x2="20" y1="12" y2="3"/><line x1="2" x2="6" y1="14" y2="14"/><line x1="10" x2="14" y1="8" y2="8"/><line x1="18" x2="22" y1="16" y2="16"/></svg>
<div class="abs t" style="left:577.5px;top:108.9px;font-size:12.7px;line-height:18px;color:#818cf8;">Standard</div>
<div class="abs" style="left:656px;top:88px;width:105px;height:58px;background:#818cf8;border-radius:6px"></div>
<svg class="ic abs" style="left:672.5px;top:112px;color:#f1f1ff;stroke-width:2" width="10.5" height="10.5" viewBox="0 0 24 24"><rect width="20" height="14" x="2" y="3" rx="2"/><line x1="8" x2="16" y1="21" y2="21"/><line x1="12" x2="12" y1="17" y2="21"/></svg>
<div class="abs t" style="left:617.8px;top:96.7px;width:200px;text-align:center;font-size:14px;line-height:20px;color:#f4f4ff;">Open</div>
<div class="abs t" style="left:618px;top:118.80000000000001px;width:200px;text-align:center;font-size:13.9px;line-height:19px;color:#f4f4ff;">WinBox</div>
<div class="abs" style="left:769px;top:88px;width:106.5px;height:58px;background:#818cf8;border-radius:6px"></div>
<svg class="ic abs" style="left:784.3px;top:112.2px;color:#f1f1ff;stroke-width:2" width="10.5" height="10.5" viewBox="0 0 24 24"><circle cx="12" cy="12" r="10"/><path d="M12 2a14.500 14.500 0 0 0 0 20 14.500 14.500 0 0 0 0-20"/><path d="M2 12h20"/></svg>
<div class="abs t" style="left:730.5px;top:96.7px;width:200px;text-align:center;font-size:14.1px;line-height:20px;color:#f4f4ff;">Remote</div>
<div class="abs t" style="left:730.5px;top:118.80000000000001px;width:200px;text-align:center;font-size:13.9px;line-height:19px;color:#f4f4ff;">WinBox</div>
<div class="abs" style="left:884px;top:98px;width:95.5px;height:38px;border:1px solid #202024;border-radius:7px"></div>
<svg class="ic abs" style="left:900.6px;top:109.25px;color:#ececf2;stroke-width:2" width="16" height="16" viewBox="0 0 24 24"><path d="M3 12a9 9 0 0 1 9-9 9.750 9.750 0 0 1 6.740 2.740L21 8"/><path d="M21 3v5h-5"/><path d="M21 12a9 9 0 0 1-9 9 9.750 9.750 0 0 1-6.740-2.740L3 16"/><path d="M8 16H3v5"/></svg>
<div class="abs t" style="left:924.5px;top:108.0px;font-size:14.3px;line-height:20px;color:#ececf2;">Reset</div>
<div class="abs" style="left:987.5px;top:88px;width:111.0px;height:58px;background:#818cf8;border-radius:6px"></div>
<svg class="ic abs" style="left:1003.5px;top:111.5px;color:#f1f1ff;stroke-width:2" width="11" height="11" viewBox="0 0 24 24"><polyline points="4 17 10 11 4 5"/><line x1="12" x2="20" y1="19" y2="19"/></svg>
<div class="abs t" style="left:952.5px;top:96.7px;width:200px;text-align:center;font-size:14px;line-height:20px;color:#f4f4ff;">SSH</div>
<div class="abs t" style="left:953px;top:118.80000000000001px;width:200px;text-align:center;font-size:13.8px;line-height:19px;color:#f4f4ff;">Terminal</div>
<div class="abs" style="left:1110.5px;top:103px;width:57.5px;height:28px;border:1px solid #212126;border-radius:6px"></div>
<svg class="ic abs" style="left:1121.5px;top:109.9px;color:#9a9aae;stroke-width:1.8" width="14" height="14" viewBox="0 0 24 24"><path d="M21.174 6.812a1 1 0 0 0-3.986-3.987L3.842 16.174a2 2 0 0 0-.500.830l-1.321 4.352a.500.500 0 0 0 .623.622l4.353-1.320a2 2 0 0 0 .830-.497z"/><path d="m15 5 4 4"/></svg>
<div class="abs t" style="left:1135.6px;top:109.8px;font-size:12.2px;line-height:17px;color:#9a9aae;">Edit</div>
<div class="abs" style="left:1176.5px;top:103px;width:71.5px;height:28px;background:#32161a;border-radius:6px"></div>
<svg class="ic abs" style="left:1186.9px;top:109.75px;color:#ef4444;stroke-width:1.8" width="14" height="14" viewBox="0 0 24 24"><path d="M3 6h18"/><path d="M19 6v14c0 1-1 2-2 2H7c-1 0-2-1-2-2V6"/><path d="M8 6V4c0-1 1-2 2-2h4c1 0 2 1 2 2v2"/><line x1="10" x2="10" y1="11" y2="17"/><line x1="14" x2="14" y1="11" y2="17"/></svg>
<div class="abs t" style="left:1200.5px;top:108.5px;font-size:12.8px;line-height:18px;color:#ef4444;">Delete</div>
<div class="abs" style="left:416px;top:228px;width:34px;height:26px;border:1px solid #47474f;border-radius:7px"></div>
<div class="abs t" style="left:333.0px;top:233.6px;width:200px;text-align:center;font-size:12px;line-height:17px;color:#5c5879;">1h</div>
<div class="abs" style="left:454px;top:228px;width:36px;height:26px;background:#1a1a2e;border:1px solid #23233c;border-radius:7px"></div>
<div class="abs t" style="left:372.0px;top:233.6px;width:200px;text-align:center;font-size:12px;line-height:17px;color:#ececf4;">6h</div>
<div class="abs" style="left:494.5px;top:228px;width:42.5px;height:26px;border:1px solid #47474f;border-radius:7px"></div>
<div class="abs t" style="left:415.75px;top:233.6px;width:200px;text-align:center;font-size:12px;line-height:17px;color:#5c5879;">24h</div>
<div class="abs" style="left:541px;top:228px;width:35.5px;height:26px;border:1px solid #47474f;border-radius:7px"></div>
<div class="abs t" style="left:458.75px;top:233.6px;width:200px;text-align:center;font-size:12px;line-height:17px;color:#5c5879;">7d</div>
<div class="abs" style="left:580.5px;top:228px;width:42.5px;height:26px;border:1px solid #47474f;border-radius:7px"></div>
<div class="abs t" style="left:501.75px;top:233.6px;width:200px;text-align:center;font-size:12px;line-height:17px;color:#5c5879;">30d</div>
<div class="abs" style="left:627.5px;top:228px;width:44.0px;height:26px;border:1px solid #47474f;border-radius:7px"></div>
<div class="abs t" style="left:549.5px;top:233.6px;width:200px;text-align:center;font-size:12px;line-height:17px;color:#5c5879;">90d</div>
<div class="abs" style="left:675.5px;top:228px;width:65.5px;height:26px;border:1px solid #47474f;border-radius:7px"></div>
<div class="abs t" style="left:608.25px;top:233.6px;width:200px;text-align:center;font-size:12px;line-height:17px;color:#5c5879;">Custom</div>
</div>
</body>
</html>
